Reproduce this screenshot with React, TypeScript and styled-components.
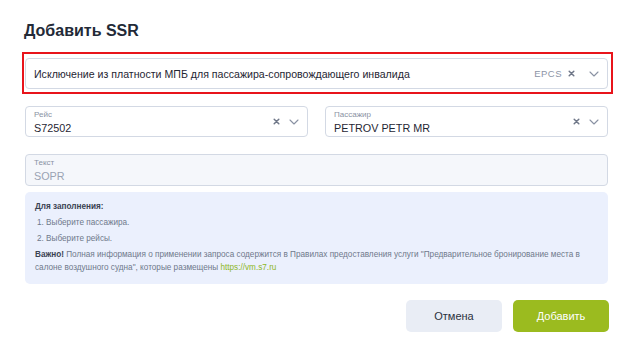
import React from "react";
import styled, { createGlobalStyle } from "styled-components";

const Global = createGlobalStyle`
  html, body { margin: 0; padding: 0; background: #ffffff; }
  body { font-family: "Liberation Sans", Arial, sans-serif; color: #1f2633; }
  * { box-sizing: border-box; }
`;

const Dialog = styled.div`
  width: 633px;
  height: 353px;
  padding: 21px 25px 0 25px;
  display: flex;
  flex-direction: column;
`;

const Title = styled.h1`
  margin: 0 0 0 -1px;
  font-size: 16px;
  font-weight: 700;
  line-height: 20px;
  color: #232a37;
`;

const Highlight = styled.div`
  margin: 11px -5px 0 -3px;
  border: 2px solid #e8141b;
  padding: 4px 3px 3px 1px;
`;

const Field = styled.div<{ $filled?: boolean; $h?: number }>`
  height: ${(p) => p.$h ?? 31}px;
  border: 1px solid #d3d9e4;
  border-radius: 4px;
  background: ${(p) => (p.$filled ? "#f5f7fb" : "#ffffff")};
  display: flex;
  align-items: center;
  padding: 0 8px 0 8px;
  min-width: 0;
`;

const FieldBody = styled.div<{ $labeled?: boolean }>`
  flex: 1;
  min-width: 0;
  align-self: stretch;
  display: flex;
  flex-direction: column;
  justify-content: ${(p) => (p.$labeled ? "flex-start" : "center")};
  padding-top: ${(p) => (p.$labeled ? 3 : 0)}px;
`;

const Label = styled.div`
  font-size: 8px;
  line-height: 10px;
  color: #8a92a3;
`;

const Value = styled.div<{ $muted?: boolean; $size?: number }>`
  font-size: ${(p) => p.$size ?? 10.8}px;
  line-height: 16px;
  color: ${(p) => (p.$muted ? "#9aa3b3" : "#1f2633")};
  white-space: nowrap;
`;

const Code = styled.span`
  font-size: 9.5px;
  letter-spacing: 0.5px;
  color: #8c94a6;
  margin-right: 6px;
`;

const Icons = styled.div<{ $gap?: number }>`
  display: flex;
  align-items: center;
  gap: ${(p) => p.$gap ?? 9}px;
`;

const Row = styled.div`
  display: grid;
  grid-template-columns: 1fr 1fr;
  gap: 17px;
  margin-top: 12px;
`;

const TextWrap = styled.div`
  margin-top: 17px;
`;

const Info = styled.div`
  margin-top: 6px;
  background: #ebf0fd;
  border-radius: 5px;
  padding: 8px 10px 0 10px;
  height: 92px;
  font-size: 8.2px;
  line-height: 13px;
  color: #6f798b;
`;

const InfoTitle = styled.div`
  font-weight: 700;
  color: #3a4252;
  margin-bottom: 3px;
`;

const Step = styled.div`
  padding-left: 2px;
  margin-bottom: 3px;
`;

const Para = styled.div``;

const Strong = styled.b`
  color: #3a4252;
`;

const Link = styled.a`
  color: #8db71e;
  text-decoration: none;
`;

const Footer = styled.div`
  display: flex;
  justify-content: flex-end;
  gap: 11px;
  margin-top: 16px;
  margin-right: -1px;
`;

const Button = styled.button<{ $primary?: boolean }>`
  width: 96px;
  height: 32px;
  border: none;
  border-radius: 5px;
  font-family: "Liberation Sans", Arial, sans-serif;
  font-size: 11px;
  background: ${(p) => (p.$primary ? "#9bbb1f" : "#e9edf5")};
  color: ${(p) => (p.$primary ? "#ffffff" : "#2b3240")};
`;

const Clear = () => (
  <svg width="7" height="7" viewBox="0 0 7 7">
    <path d="M1.2 1.2 L5.8 5.8 M5.8 1.2 L1.2 5.8" stroke="#6f7788" strokeWidth="1.5" strokeLinecap="round" />
  </svg>
);

const Chevron = () => (
  <svg width="10" height="6" viewBox="0 0 10 6">
    <path d="M1 1 L5 5 L9 1" stroke="#8a92a3" strokeWidth="1.1" fill="none" strokeLinecap="round" strokeLinejoin="round" />
  </svg>
);

export default function App() {
  return (
    <>
      <Global />
      <Dialog>
        <Title>Добавить SSR</Title>
        <Highlight>
          <Field>
            <FieldBody>
              <Value $size={10.6}>Исключение из платности МПБ для пассажира-сопровождающего инвалида</Value>
            </FieldBody>
            <Code>EPCS</Code>
            <Icons $gap={14}>
              <Clear />
              <Chevron />
            </Icons>
          </Field>
        </Highlight>
        <Row>
          <Field>
            <FieldBody $labeled>
              <Label>Рейс</Label>
              <Value>S72502</Value>
            </FieldBody>
            <Icons>
              <Clear />
              <Chevron />
            </Icons>
          </Field>
          <Field>
            <FieldBody $labeled>
              <Label>Пассажир</Label>
              <Value>PETROV PETR MR</Value>
            </FieldBody>
            <Icons>
              <Clear />
              <Chevron />
            </Icons>
          </Field>
        </Row>
        <TextWrap>
          <Field $filled $h={32}>
            <FieldBody $labeled>
              <Label>Текст</Label>
              <Value $muted>SOPR</Value>
            </FieldBody>
          </Field>
        </TextWrap>
        <Info>
          <InfoTitle>Для заполнения:</InfoTitle>
          <Step>1. Выберите пассажира.</Step>
          <Step>2. Выберите рейсы.</Step>
          <Para>
            <Strong>Важно!</Strong> Полная информация о применении запроса содержится в Правилах предоставления услуги
            "Предварительное бронирование места в салоне воздушного судна", которые размещены{" "}
            <Link href="#">https://vm.s7.ru</Link>
          </Para>
        </Info>
        <Footer>
          <Button>Отмена</Button>
          <Button $primary>Добавить</Button>
        </Footer>
      </Dialog>
    </>
  );
}
